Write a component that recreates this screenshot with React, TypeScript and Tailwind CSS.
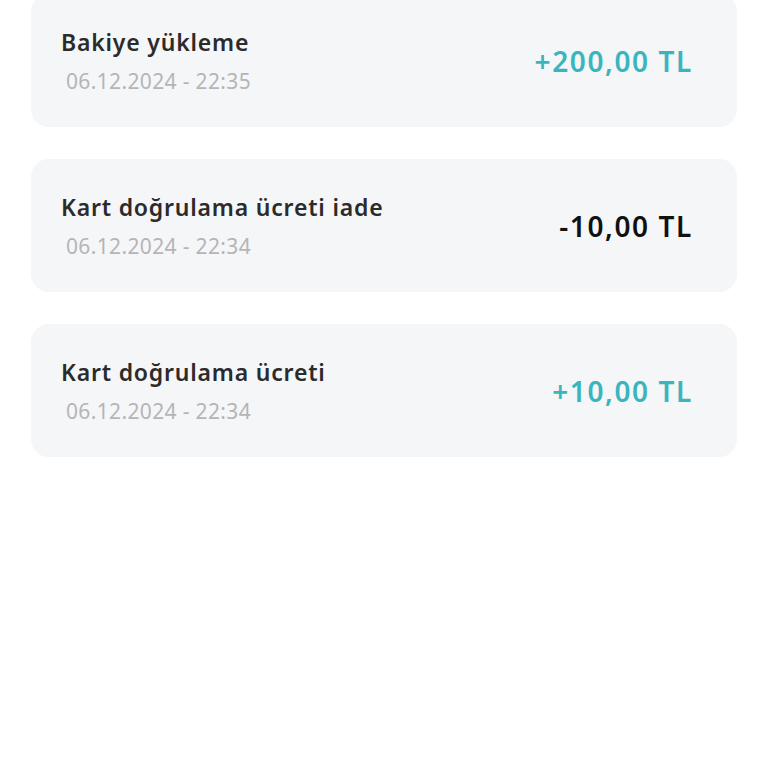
import React from "react";

const items = [
  { title: "Bakiye yükleme", date: "06.12.2024 - 22:35", amount: "+200,00 TL", positive: true },
  { title: "Kart doğrulama ücreti iade", date: "06.12.2024 - 22:34", amount: "-10,00 TL", positive: false },
  { title: "Kart doğrulama ücreti", date: "06.12.2024 - 22:34", amount: "+10,00 TL", positive: true },
];

export default function App() {
  return (
    <div
      className="w-[768px] h-[768px] bg-white overflow-hidden"
      style={{ fontFamily: "'Noto Sans', sans-serif" }}
    >
      <div className="flex flex-col gap-[32px] px-[31px] mt-[-6px]">
        {items.map((it, i) => (
          <div
            key={i}
            className="h-[133px] rounded-[18px] bg-[#f5f6f8] flex items-center justify-between pl-[30px] pr-[44px]"
          >
            <div className="flex flex-col">
              <div className="text-[23px] leading-[30px] font-semibold tracking-[0.8px] text-[#2b2b2b]">{it.title}</div>
              <div className="ml-[5px] mt-[11px] text-[21px] leading-[26px] tracking-[0.35px] text-[#b5b5b5]">{it.date}</div>
            </div>
            <div
              className={
                "text-[28px] font-semibold tracking-[1.6px] " + (it.positive ? "text-[#3ab5bd]" : "text-[#111111]")
              }
            >
              {it.amount}
            </div>
          </div>
        ))}
      </div>
    </div>
  );
}
